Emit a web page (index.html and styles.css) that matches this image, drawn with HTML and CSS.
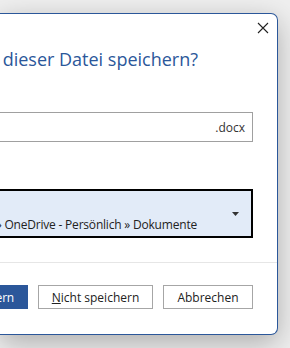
FILE: index.html
```html
<!DOCTYPE html>
<html lang="de">
<head>
<meta charset="utf-8">
<link rel="stylesheet" href="styles.css">
</head>
<body>
<div class="dialog">
  <div class="titlebar">
    <button class="close" aria-label="Schließen">
      <svg width="12" height="12" viewBox="0 0 12 12"><path d="M1 1 L11 11 M11 1 L1 11" stroke="#222" stroke-width="1.1" fill="none"/></svg>
    </button>
  </div>
  <div class="body">
    <div class="title"><span>Möchten Sie die Änderungen an dieser Datei speichern?</span></div>
    <div class="label label-name">Dateiname</div>
    <div class="input"><span class="name">Dokument1</span><span class="ext">.docx</span></div>
    <div class="label label-loc">Speicherort auswählen</div>
    <div class="location">
      <div class="loc-text">
        <div class="loc-name">Dokumente</div>
        <div class="loc-path">Kathrin » OneDrive - Persönlich » Dokumente</div>
      </div>
      <svg class="arrow" width="7" height="4" viewBox="0 0 7 4"><path d="M0 0 H7 L3.5 4 Z" fill="#333"/></svg>
    </div>
  </div>
  <div class="footer">
    <button class="btn primary">Speichern</button>
    <button class="btn"><u>N</u>icht speichern</button>
    <button class="btn">Abbrechen</button>
  </div>
</div>
</body>
</html>
```
FILE: styles.css
```css
html, body {
  margin: 0;
  padding: 0;
  width: 290px;
  height: 348px;
  overflow: hidden;
  background: #efefef;
  font-family: "Open Sans", "Noto Sans", sans-serif;
}
.dialog {
  box-sizing: border-box;
  width: 278px;
  height: 322px;
  margin-top: 13px;
  background: #fff;
  border: 1px solid #2b579a;
  border-left: none;
  border-radius: 0 7px 7px 0;
  box-shadow: 0 8px 28px rgba(0,0,0,0.28);
  overflow: hidden;
  display: flex;
  flex-direction: column;
}
.titlebar {
  box-sizing: border-box;
  height: 30px;
  display: flex;
  justify-content: flex-end;
  align-items: flex-start;
  padding: 8px 8px 0 0;
  flex: none;
}
.close {
  border: none;
  background: none;
  padding: 0;
  width: 12px;
  height: 12px;
  display: flex;
}
.body {
  padding-right: 24px;
  display: flex;
  flex-direction: column;
}
.title {
  display: flex;
  justify-content: flex-end;
  padding-right: 55px;
  white-space: nowrap;
  font-size: 18px;
  color: #2b579a;
  height: 30px;
  line-height: 30px;
}
.label {
  white-space: nowrap;
  display: flex;
  justify-content: flex-end;
  visibility: hidden;
  font-size: 12px;
}
.label-name { height: 38px; }
.label-loc { height: 47px; }
.input {
  box-sizing: border-box;
  height: 30px;
  border: 1px solid #a0a0a0;
  border-left: none;
  display: flex;
  align-items: center;
  justify-content: flex-end;
  padding-right: 7px;
  font-size: 12px;
  color: #333;
}
.input .name { display: none; }
.location {
  box-sizing: border-box;
  height: 49px;
  border: 2px solid #000;
  border-left: none;
  background: #e2ebf8;
  display: flex;
  align-items: flex-start;
}
.loc-text {
  flex: 1;
  display: flex;
  flex-direction: column;
  align-items: flex-end;
  padding-right: 35px;
  white-space: nowrap;
  font-size: 12px;
  letter-spacing: -0.2px;
  color: #222;
  min-width: 0;
}
.loc-name { height: 20px; line-height: 20px; visibility: hidden; }
.loc-path { margin-top: 6px; line-height: 16px; }
.arrow { margin: 21px 12px 0 0; flex: none; }
.footer {
  margin-top: 24px;
  border-top: 1px solid #e6e6e6;
  padding: 22px 24px 0 0;
  display: flex;
  justify-content: flex-end;
  gap: 10px;
  white-space: nowrap;
}
.btn {
  box-sizing: border-box;
  height: 24px;
  border: 1px solid #a6a6a6;
  background: #fff;
  font-family: "Open Sans", "Noto Sans", sans-serif;
  font-size: 12px;
  color: #222;
  padding: 0;
  flex: none;
}
.btn:nth-child(2) { width: 115px; }
.btn:nth-child(3) { width: 90px; }
.btn.primary {
  width: 90px;
  background: #2b579a;
  border-color: #2b579a;
  color: #fff;
  text-align: right;
  padding-right: 13px;
  letter-spacing: -0.2px;
}
```
